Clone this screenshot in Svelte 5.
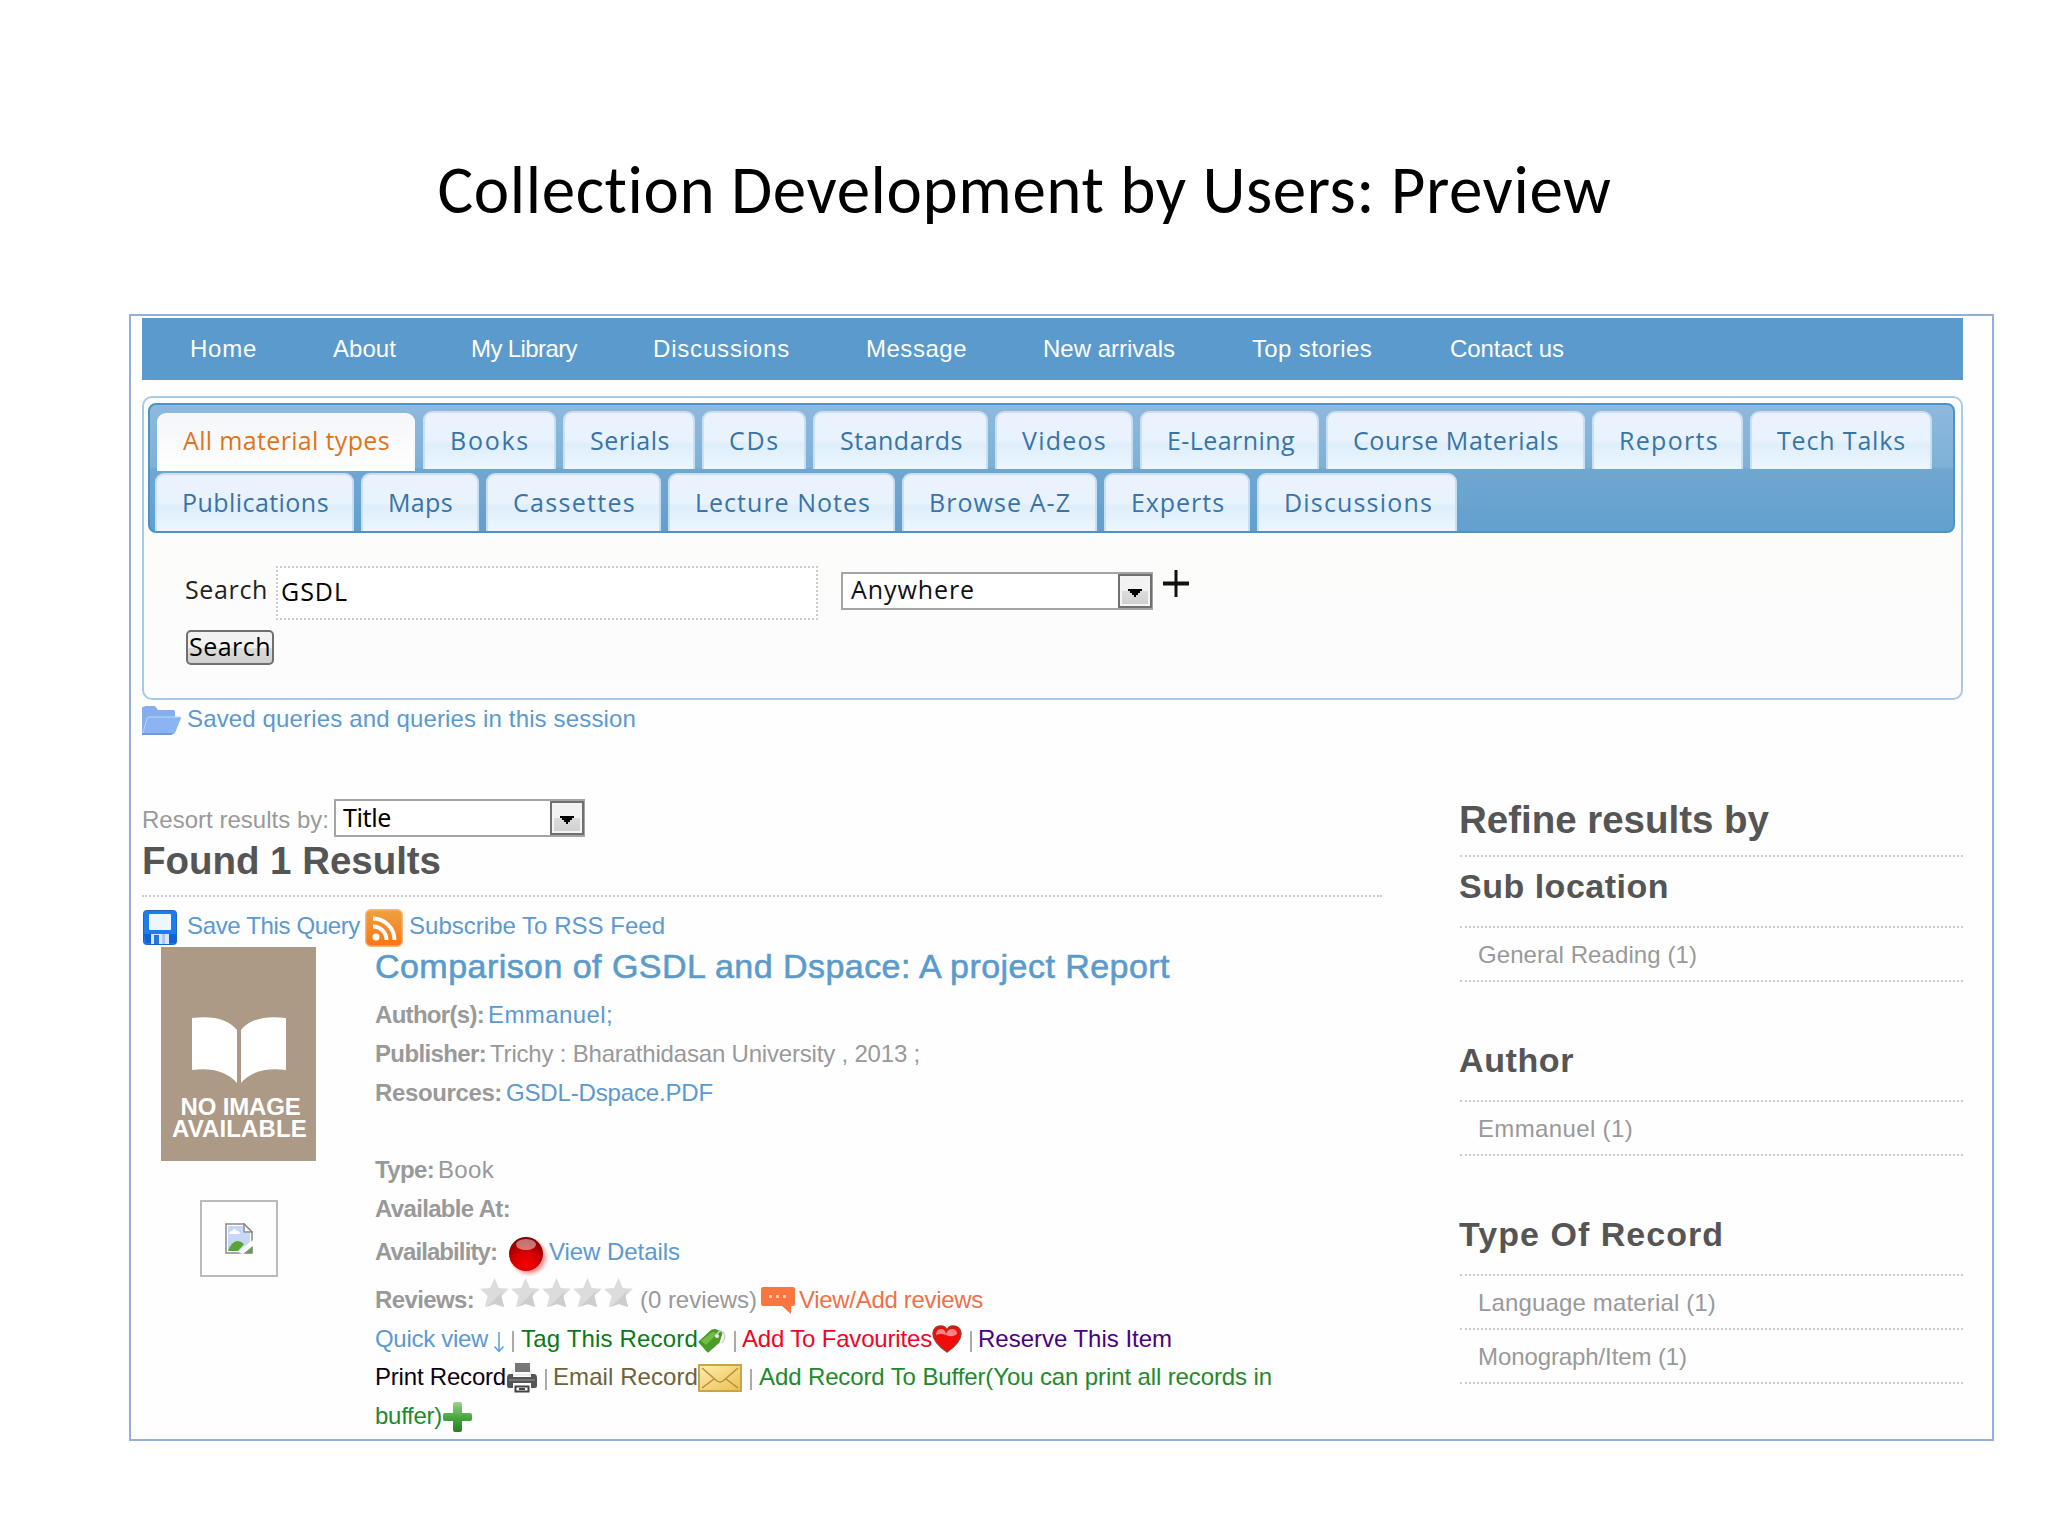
<script lang="ts">
    type Label = { text: string; width: number; gap?: number };

    const nav: Label[] = [
        { text: "Home", width: 67, gap: 48 },
        { text: "About", width: 63, gap: 76 },
        { text: "My Library", width: 106, gap: 75 },
        { text: "Discussions", width: 137, gap: 76 },
        { text: "Message", width: 101, gap: 76 },
        { text: "New arrivals", width: 132, gap: 76 },
        { text: "Top stories", width: 120, gap: 77 },
        { text: "Contact us", width: 114, gap: 78 },
    ];

    const tabRows = [
        [
            { text: "All material types", width: 207, tab: 258, active: true },
            { text: "Books", width: 80, tab: 133 },
            { text: "Serials", width: 80, tab: 132 },
            { text: "CDs", width: 51, tab: 104 },
            { text: "Standards", width: 123, tab: 175 },
            { text: "Videos", width: 85, tab: 138 },
            { text: "E-Learning", width: 128, tab: 179 },
            { text: "Course Materials", width: 206, tab: 259 },
            { text: "Reports", width: 100, tab: 151 },
            { text: "Tech Talks", width: 129, tab: 182 },
        ],
        [
            { text: "Publications", width: 147, tab: 199 },
            { text: "Maps", width: 65, tab: 118 },
            { text: "Cassettes", width: 123, tab: 175 },
            { text: "Lecture Notes", width: 176, tab: 227 },
            { text: "Browse A-Z", width: 142, tab: 195 },
            { text: "Experts", width: 94, tab: 146 },
            { text: "Discussions", width: 149, tab: 200 },
        ],
    ];

    const facets = [
        { title: "Sub location", width: 210, items: [{ text: "General Reading (1)", width: 219 }] },
        { title: "Author", width: 115, items: [{ text: "Emmanuel (1)", width: 155 }] },
        {
            title: "Type Of Record",
            width: 265,
            items: [
                { text: "Language material (1)", width: 238 },
                { text: "Monograph/Item (1)", width: 209 },
            ],
        },
    ];

    const star = "M14.5 0l4.3 10 10.2.8-7.6 7.2 2.8 11-9.7-3-9.7 3 2.8-11L0 10.8 10.200 10z";

    /** Tracks the letters out (or in) until the label is `width` px wide */
    function fit(node: HTMLElement, width: number) {
        const natural = node.getBoundingClientRect().width;
        const count = (node.textContent ?? "").length;
        node.style.letterSpacing = `${(width - natural) / count}px`;
    }
</script>

{#snippet label(text: string, width: number, gap = 0, cls = "")}
    <span class="label {cls}" style:margin-left="{gap}px" use:fit={width}>{text}</span>
{/snippet}

{#snippet arrow()}
    <span class="drop">
        <svg width="14" height="8" viewBox="0 0 14 8"><path d="M0 0h14v2h-2v2h-2v2H8v2H6V6H4V4H2V2H0z" /></svg>
    </span>
{/snippet}

<h1>{@render label("Collection Development by Users: Preview", 1174, 1)}</h1>

<div class="frame">
    <nav>
        {#each nav as n}
            {@render label(n.text, n.width, n.gap)}
        {/each}
    </nav>

    <section class="box">
        <div class="tabs">
            {#each tabRows as row, i}
                <div class="tab-row" class:second={i === 1}>
                    {#each row as t}
                        <div class="tab" class:active={t.active} style:width="{t.tab}px">
                            {@render label(t.text, t.width)}
                        </div>
                    {/each}
                </div>
            {/each}
        </div>
        <div class="form">
            <div class="query">
                {@render label("Search", 83, 0, "search-label")}
                <div class="input">{@render label("GSDL", 67)}</div>
                <div class="select where">
                    {@render label("Anywhere", 124, 8)}
                    {@render arrow()}
                </div>
                <svg class="more" width="26" height="27" viewBox="0 0 26 27">
                    <path d="M11.500 0h3v11.500H26v4H14.500V27h-3V15.500H0v-4h11.500z" fill="#111" />
                </svg>
            </div>
            <button>{@render label("Search", 82)}</button>
        </div>
    </section>

    <div class="saved">
        <svg width="39" height="29" viewBox="0 0 39 29">
            <path d="M0 1h2l1-1h10l3 4h15q2 0 2 2v4L31 28H0z" fill="#86aeed" />
            <path d="M1 28L5 12q1-1 2-1h31q1 0 1 1l-6 15q-1 1-2 1z" fill="#8bb4f3" />
            <path d="M1 27L5 12q1-1 2-1h31" fill="none" stroke="#b9d3fb" />
            <path d="M0 27h31l-1 2H0z" fill="#6f9bde" />
        </svg>
        {@render label("Saved queries and queries in this session", 449, 6, "blue")}
    </div>

    <div class="columns">
        <main>
            <div class="resort">
                {@render label("Resort results by:", 187)}
                <div class="select sort">
                    {@render label("Title", 48, 7)}
                    {@render arrow()}
                </div>
            </div>
            <h2>{@render label("Found 1 Results", 299)}</h2>
            <div class="feeds">
                <svg class="disk" width="34" height="35" viewBox="0 0 34 35">
                    <rect x=".5" y=".5" width="33" height="34" rx="3" fill="#1f7cf0" stroke="#2462b8" />
                    <path d="M1 24h32v9H3z" fill="#0d62d8" />
                    <rect x="6" y="4" width="22" height="16" rx="1" fill="#eef6ff" />
                    <rect x="8" y="24" width="18" height="10" fill="#d9e8f8" />
                    <rect x="11" y="25" width="5" height="9" fill="#2776de" />
                    <rect x="19" y="24" width="3" height="10" fill="#a9c8ec" />
                </svg>
                {@render label("Save This Query", 173, 10, "blue")}
                <svg class="rss" width="38" height="38" viewBox="0 0 38 38">
                    <defs>
                        <linearGradient id="rss" x2="0" y2="1">
                            <stop offset="0" stop-color="#eba243" />
                            <stop offset="1" stop-color="#fb7414" />
                        </linearGradient>
                    </defs>
                    <rect x=".7" y=".7" width="36.600" height="36.600" rx="5" fill="url(#rss)" stroke="#f7b877" stroke-width="1.400" />
                    <circle cx="11" cy="28" r="3.500" fill="#fff" />
                    <path d="M8 17.500a13.500 13.500 0 0 1 13.500 13.500M8 9.500A21.500 21.500 0 0 1 29.500 31" fill="none" stroke="#fff" stroke-width="4" />
                </svg>
                {@render label("Subscribe To RSS Feed", 256, 6, "blue")}
            </div>

            <div class="record">
                <aside>
                    <div class="cover">
                        <svg width="94" height="66" viewBox="0 0 94 66">
                            <path d="M0 1Q32-3 45 13V66Q30 49 0 53zM94 1Q62-3 49 13V66Q64 49 94 53z" fill="#fff" />
                        </svg>
                        {@render label("NO IMAGE", 120, 4)}
                        {@render label("AVAILABLE", 135, 2)}
                    </div>
                    <div class="missing">
                        <svg width="28" height="31" viewBox="0 0 28 31">
                            <path d="M1 1h18l8 8v21H1z" fill="#fff" stroke="#8a8a8a" stroke-width="1.500" />
                            <path d="M3 3h15v7h7v9L14 28H3z" fill="#c6d8f6" />
                            <path d="M4 11q0-3 3-3 2-4 5 0 3 0 3 3z" fill="#fff" />
                            <path d="M3 28q3-9 9-10 4 0 7 3l-6 7z" fill="#58a632" />
                            <path d="M19 1v8h8z" fill="#fff" stroke="#8a8a8a" stroke-width="1.500" />
                            <path d="M28 17L14 30l4 1 10-8z" fill="#fff" />
                            <path d="M27 24v6h-7z" fill="#58a632" stroke="#8a8a8a" />
                        </svg>
                    </div>
                </aside>

                <div class="details">
                    <h3>{@render label("Comparison of GSDL and Dspace: A project Report", 795)}</h3>
                    <div class="row">
                        {@render label("Author(s):", 109, 0, "key")}
                        {@render label("Emmanuel;", 125, 4, "blue")}
                    </div>
                    <div class="row">
                        {@render label("Publisher:", 111, 0, "key")}
                        {@render label("Trichy : Bharathidasan University , 2013 ;", 430, 4)}
                    </div>
                    <div class="row">
                        {@render label("Resources:", 127, 0, "key")}
                        {@render label("GSDL-Dspace.PDF", 207, 4, "blue")}
                    </div>
                    <div class="row type">
                        {@render label("Type:", 59, 0, "key")}
                        {@render label("Book", 56, 4)}
                    </div>
                    <div class="row">{@render label("Available At:", 135, 0, "key")}</div>
                    <div class="row availability">
                        {@render label("Availability:", 122, 0, "key")}
                        <svg class="ball" width="42" height="40" viewBox="0 0 42 40">
                            <defs>
                                <radialGradient id="ball" cx=".5" cy=".8" r=".75">
                                    <stop offset="0" stop-color="#f80000" />
                                    <stop offset=".5" stop-color="#d40000" />
                                    <stop offset="1" stop-color="#850000" />
                                </radialGradient>
                                <radialGradient id="glow">
                                    <stop offset=".75" stop-color="#f66" stop-opacity=".6" />
                                    <stop offset="1" stop-color="#f99" stop-opacity="0" />
                                </radialGradient>
                            </defs>
                            <circle cx="20" cy="20" r="20" fill="url(#glow)" />
                            <circle cx="17" cy="17" r="17" fill="url(#ball)" />
                            <ellipse cx="17" cy="7.500" rx="10" ry="5.500" fill="#fff" opacity=".45" />
                        </svg>
                        {@render label("View Details", 131, 0, "blue")}
                    </div>
                    <div class="row reviews">
                        {@render label("Reviews:", 99, 0, "key")}
                        <svg class="stars" width="154" height="30" viewBox="0 0 154 30">
                            {#each [0, 31, 62, 93, 124] as x}
                                <g transform="translate({x} 0)">
                                    <path d={star} fill="#dcdcdc" />
                                    <path d="M23 13L10 26l-4 3 9-3 9 3-2.800-11z" fill="#cdcdcd" />
                                </g>
                            {/each}
                        </svg>
                        {@render label("(0 reviews)", 117, 6)}
                        <svg class="bubble" width="34" height="27" viewBox="0 0 34 27">
                            <path d="M2 0h30q2 0 2 2v15q0 2-2 2h-2v8l-9-8H2q-2 0-2-2V2q0-2 2-2z" fill="#fb7540" />
                            <path d="M8 8h3v3H8zM15 8h3v3h-3zM22 8h3v3h-3z" fill="#ffc8a8" />
                        </svg>
                        {@render label("View/Add reviews", 184, 4, "orange")}
                    </div>
                    <div class="row">
                        {@render label("Quick view", 113, 0, "blue")}
                        <svg class="down" width="10" height="21" viewBox="0 0 10 21">
                            <path d="M5 0v18M.500 14.500L5 19.500l4.500-5" fill="none" stroke="#5b9ad6" stroke-width="1.500" />
                        </svg>
                        <i></i>
                        {@render label("Tag This Record", 177, 7, "green")}
                        <svg class="tag" width="28" height="25" viewBox="0 0 28 25">
                            <path d="M1 12L13 1q2-1 4-1l6 2q2 1 1 4l-2 6q0 2-2 3l-9 8q-1 1-2 0L1 14q-1-1 0-2z" fill="#4b9b27" />
                            <path d="M3 12L14 3l6 1-12 12z" fill="#74bd45" />
                            <circle cx="19" cy="7" r="2" fill="#eef5ea" />
                            <path d="M19 6q2-6 6-3 4 5-1 11" fill="none" stroke="#c9d2c6" stroke-width="1.500" />
                        </svg>
                        <i></i>
                        {@render label("Add To Favourites", 190, 6, "red")}
                        <svg class="heart" width="30" height="28" viewBox="0 0 30 28">
                            <path d="M15 27Q1 17 1 8.500 2 1 9 1q4 0 6 4 2-4 6-4 7 0 8 7.500Q29 17 15 27z" fill="#f30a0a" stroke="#a03828" stroke-width="1.500" />
                            <path d="M4 10q0-6 5-6 4 0 5 5 2-5 6-5 5 0 5 5-5 4-11 1-5-2-10 0z" fill="#fff" opacity=".5" />
                        </svg>
                        <i></i>
                        {@render label("Reserve This Item", 194, 6, "purple")}
                    </div>
                    <div class="row">
                        {@render label("Print Record", 131, 0, "black")}
                        <svg class="printer" width="30" height="30" viewBox="0 0 30 30">
                            <path d="M8 0h15v9H8z" fill="#777" />
                            <path d="M6 7v5h18V7" fill="none" stroke="#ddd" />
                            <path d="M3 11h3v3h18v-3h3q3 0 3 4v8q0 2-2 2h-4v-5H6v5H2q-2 0-2-2v-8q0-4 3-4z" fill="#555" />
                            <path d="M2 17h26" stroke="#999" />
                            <path d="M6 21h18l-1 9H7z" fill="#fff" />
                            <path d="M8.500 23.500h13v5h-13zM12 26h6" fill="none" stroke="#444" stroke-width="2" />
                        </svg>
                        <i></i>
                        {@render label("Email Record", 145, 6, "olive")}
                        <svg class="mail" width="44" height="28" viewBox="0 0 44 28">
                            <defs>
                                <linearGradient id="mail" x2="1" y2="1">
                                    <stop offset="0" stop-color="#fdeeb0" />
                                    <stop offset="1" stop-color="#ecbf4d" />
                                </linearGradient>
                            </defs>
                            <rect x="1" y="1" width="42" height="26" fill="url(#mail)" stroke="#c9a44d" stroke-width="2" />
                            <path d="M4 4l15 13q3 2 6 0L40 4M4 24l12-9M40 24l-12-9" fill="none" stroke="#b78d3c" stroke-width="1.500" />
                        </svg>
                        <i></i>
                        {@render label("Add Record To Buffer(You can print all records in", 513, 7, "green2")}
                    </div>
                    <div class="row">
                        {@render label("buffer)", 67, 0, "green2")}
                        <svg class="plus" width="29" height="30" viewBox="0 0 29 30">
                            <defs>
                                <linearGradient id="plus" x2="0" y2="1">
                                    <stop offset="0" stop-color="#9ed38b" />
                                    <stop offset=".5" stop-color="#4aa843" />
                                    <stop offset="1" stop-color="#24801f" />
                                </linearGradient>
                            </defs>
                            <path d="M12 0h5q2 0 2 2v9h8q2 0 2 2v4q0 2-2 2h-8v9q0 2-2 2h-5q-2 0-2-2v-9H2q-2 0-2-2v-4q0-2 2-2h8V2q0-2 2-2z" fill="url(#plus)" />
                        </svg>
                    </div>
                </div>
            </div>
        </main>

        <div class="refine">
            <h2>{@render label("Refine results by", 310, -1)}</h2>
            {#each facets as f}
                <section class="facet">
                    <h4>{@render label(f.title, f.width, -1)}</h4>
                    {#each f.items as item}
                        <div class="item">{@render label(item.text, item.width)}</div>
                    {/each}
                </section>
            {/each}
        </div>
    </div>
</div>

<style>
    :global(body) {
        background-color: #fff;
        font-family: "Liberation Sans", Arial, sans-serif;
        font-size: 24px;
        color: #999;
    }
    h1,
    h2,
    h3,
    h4 {
        margin: 0;
    }
    svg {
        display: block;
        flex: none;
    }
    .label {
        display: inline-block;
        white-space: pre;
        flex: none;
        font-variant-ligatures: none;
    }
    h1 {
        height: 314px;
        box-sizing: border-box;
        padding-top: 144px;
        text-align: center;
        font: 400 67px/92px Carlito, Lato, sans-serif;
        color: #000;
    }
    .frame {
        box-sizing: border-box;
        width: 1865px;
        height: 1127px;
        margin-left: 129px;
        padding: 2px 29px 0 11px;
        border: 2px solid #93afda;
        background-color: #fefefe;
    }
    nav {
        display: flex;
        height: 62px;
        line-height: 62px;
        background-color: #5b9acc;
        color: #fff;
    }
    .box {
        box-sizing: border-box;
        height: 304px;
        margin-top: 16px;
        padding: 5px 6px 0 4px;
        border: 2px solid #a9cae4;
        border-radius: 10px;
        background: linear-gradient(#fff 6px, #fcfcfa 140px, #fdfcfe);
        font-family: "Open Sans", sans-serif;
        font-size: 25px;
    }
    .tabs {
        box-sizing: border-box;
        height: 130px;
        padding: 6px 0 0;
        border: 2px solid #4f93c6;
        border-radius: 8px;
        background: linear-gradient(#8fb8de, #7eb1d7 49%, #70a7d1 51%, #63a0ce);
    }
    .tab-row {
        display: flex;
        gap: 7px;
        height: 62px;
        padding-left: 7px;
    }
    .second {
        padding-left: 5px;
    }
    .tab {
        box-sizing: border-box;
        height: 58px;
        padding-left: 25px;
        border: solid #c6dff3;
        border-width: 2px 2px 0;
        border-radius: 9px 9px 0 0;
        background: linear-gradient(#ecf2fd, #e8f3fd 50%, #deeefa 55%, #ecf6ff);
        line-height: 54px;
        color: #3a74a6;
    }
    .active {
        margin: 2px 1px 0 0;
        padding-left: 24px;
        border-color: #f6f8fb;
        background: linear-gradient(#f5f6fa, #fff);
        line-height: 51px;
        color: #e17419;
    }
    .form {
        padding: 33px 0 0 37px;
        color: #222;
    }
    .query {
        display: flex;
        height: 54px;
    }
    .search-label {
        line-height: 47px;
    }
    .input {
        box-sizing: border-box;
        width: 542px;
        height: 54px;
        margin-left: 8px;
        padding-left: 3px;
        border: 2px dotted #ccc;
        background-color: #fff;
        line-height: 47px;
        color: #000;
    }
    .select {
        box-sizing: border-box;
        display: flex;
        justify-content: space-between;
        height: 38px;
        border: 2px solid #a5a5a5;
        background-color: #fff;
        font-family: "Open Sans", sans-serif;
        font-size: 25px;
        line-height: 31px;
        color: #111;
    }
    .where {
        width: 312px;
        margin: 6px 0 0 23px;
    }
    .sort {
        width: 251px;
        margin-left: 5px;
        font-family: "Noto Sans", sans-serif;
        font-size: 25px;
        color: #000;
    }
    .drop {
        box-sizing: border-box;
        display: flex;
        align-items: center;
        justify-content: center;
        width: 34px;
        height: 34px;
        margin-right: -1px;
        border: 2px solid #707070;
        background: linear-gradient(#f2f2f2 50%, #dcdcdc 50%, #cfcfcf);
        box-shadow: inset 0 0 0 2px #f4f4f4;
    }
    .drop svg {
        margin-top: 3px;
    }
    .more {
        margin: 4px 0 0 10px;
    }
    button {
        box-sizing: border-box;
        display: block;
        width: 88px;
        height: 35px;
        margin: 10px 0 0 1px;
        padding: 0 0 2px 1px;
        border: 2px solid #707070;
        border-radius: 5px;
        background: linear-gradient(#f2f2f2 50%, #dcdcdc 50%, #cfcfcf);
        font: 25px/27px "Open Sans", sans-serif;
        text-align: left;
        color: #000;
    }
    .saved {
        display: flex;
        height: 37px;
        line-height: 38px;
    }
    .saved svg {
        margin-top: 6px;
    }
    .columns {
        display: flex;
        justify-content: space-between;
        margin-top: 62px;
    }
    main {
        width: 1240px;
    }
    .resort {
        display: flex;
        height: 38px;
        line-height: 41px;
    }
    .resort .select {
        line-height: 33px;
    }
    h2 {
        box-sizing: border-box;
        border-bottom: 2px dotted #ccc;
        font-size: 38.5px;
        color: #555;
    }
    main h2 {
        height: 60px;
        line-height: 47px;
    }
    .feeds {
        display: flex;
        height: 41px;
        margin-top: 9px;
        line-height: 40px;
    }
    .disk {
        margin: 4px 0 0 1px;
    }
    .rss {
        margin: 3px 0 0 5px;
    }
    .record {
        display: flex;
        padding-left: 19px;
    }
    aside {
        width: 214px;
    }
    .cover {
        box-sizing: border-box;
        display: flex;
        flex-direction: column;
        align-items: center;
        width: 155px;
        height: 214px;
        padding-top: 70px;
        background-color: #ac9a87;
        font-size: 24px;
        font-weight: bold;
        line-height: 22px;
        color: #fff;
    }
    .cover svg {
        margin-bottom: 13px;
    }
    .missing {
        box-sizing: border-box;
        width: 78px;
        height: 77px;
        margin: 39px 0 0 39px;
        padding: 21px 0 0 23px;
        border: 2px solid #bbb;
    }
    .details {
        flex: 1;
    }
    h3 {
        height: 49px;
        font-size: 34px;
        font-weight: normal;
        line-height: 39px;
        color: #5b9bcb;
        -webkit-text-stroke: 0.6px #5b9bcb;
    }
    .row {
        display: flex;
        height: 38.800px;
        line-height: 38.800px;
    }
    .type {
        margin-top: 38.800px;
    }
    .availability {
        height: 46px;
        line-height: 46px;
    }
    .reviews {
        margin-top: 6px;
    }
    .key {
        font-weight: bold;
    }
    .ball {
        margin: 8px -2px 0 12px;
    }
    .stars {
        margin: -3px 0 0 6px;
    }
    .bubble {
        margin: 6px 0 0 4px;
    }
    .down {
        margin: 12px 0 0 6px;
    }
    .tag {
        margin-top: 9px;
    }
    .heart {
        margin-top: 5px;
    }
    .printer {
        margin: 5px 0 0 1px;
    }
    .mail {
        margin-top: 6px;
    }
    .plus {
        margin: 5px 0 0 1px;
    }
    .row i {
        width: 2px;
        height: 21px;
        margin: 11px 0 0 8px;
        background-color: #aaa;
    }
    .blue {
        color: #5b99d0;
    }
    .orange {
        color: #f07048;
    }
    .green {
        color: #0a7a18;
    }
    .green2 {
        color: #1f8a2c;
    }
    .red {
        color: #f00528;
    }
    .purple {
        color: #4b0082;
    }
    .black {
        color: #0c0010;
    }
    .olive {
        color: #6e6238;
    }
    .refine {
        width: 503px;
    }
    .refine h2 {
        height: 58px;
        line-height: 41px;
    }
    .facet {
        margin-bottom: 49px;
    }
    h4 {
        box-sizing: border-box;
        height: 71px;
        border-bottom: 2px dotted #ccc;
        font-size: 34px;
        line-height: 59px;
        color: #555;
    }
    .item {
        height: 52px;
        padding-left: 18px;
        border-bottom: 2px dotted #ccc;
        line-height: 53px;
    }
</style>
